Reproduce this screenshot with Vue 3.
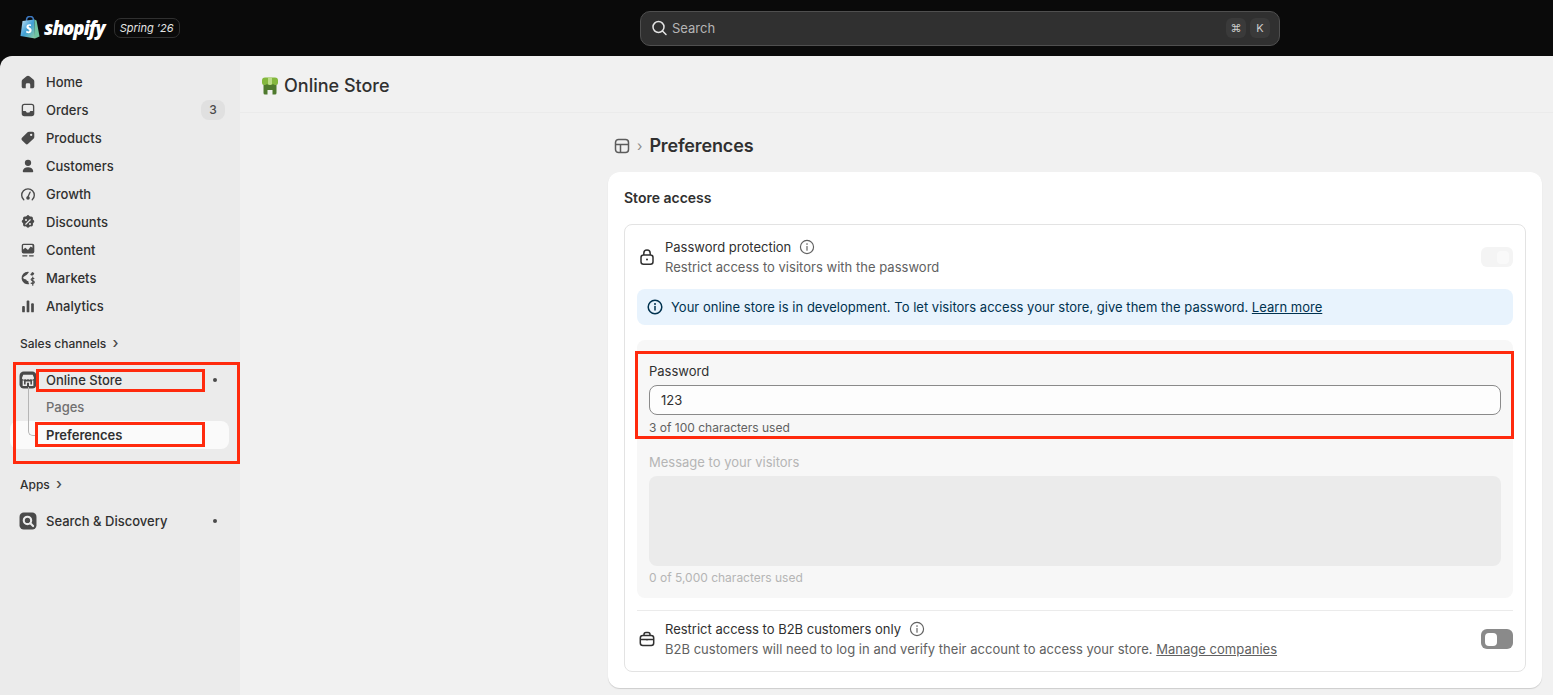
<script setup>
const navItems = [
  { label: 'Home', icon: 'home' },
  { label: 'Orders', icon: 'orders', badge: '3' },
  { label: 'Products', icon: 'products' },
  { label: 'Customers', icon: 'customers' },
  { label: 'Growth', icon: 'growth' },
  { label: 'Discounts', icon: 'discounts' },
  { label: 'Content', icon: 'content' },
  { label: 'Markets', icon: 'markets' },
  { label: 'Analytics', icon: 'analytics' },
];
</script>

<template>
  <div class="page">
    <header class="topbar">
      <div class="brand">
        <svg class="bag" viewBox="0 0 20 23" width="20" height="23">
          <defs>
            <linearGradient id="bagFill" x1="0" y1="0" x2="1" y2="1">
              <stop offset="0" stop-color="#cfe6f5" />
              <stop offset="0.5" stop-color="#3f9fd6" />
              <stop offset="1" stop-color="#8fcf9f" />
            </linearGradient>
          </defs>
          <path d="M6.500 6V4.500C6.500 2 8 .5 10 .5s3.500 1.500 3.500 4V6" fill="none" stroke="#3d78c0" stroke-width="1.500" />
          <path d="M2.500 5 14.500 3.500 15 22.500.5 20z" fill="url(#bagFill)" />
          <path d="M14.500 3.500 16.500 4.500 19.500 20.500 15 22.500z" fill="#6fc3a0" />
          <path d="M11.200 8.700c-.5-.3-1.200-.4-1.800-.4-2 0-3 1.300-3 2.600 0 2.200 3 2.200 3 3.500 0 .6-.5 1-1.100 1-.8 0-1.800-.6-1.800-.6l-.5 1.700s.9.700 2.400.7c2 0 3.200-1.300 3.200-3 0-2.400-3-2.600-3-3.600 0-.4.300-.8 1-.8.600 0 1.200.3 1.200.3z" fill="#fff" />
        </svg>
        <span class="wordmark">shopify</span>
        <span class="edition">Spring ’26</span>
      </div>
      <div class="search">
        <svg viewBox="0 0 20 20" width="20" height="20" fill="none" stroke="#e3e3e3" stroke-width="1.500" stroke-linecap="round">
          <circle cx="9.500" cy="9" r="5.500" />
          <path d="m13.500 13 3.500 3.500" />
        </svg>
        <span class="search-text">Search</span>
        <span class="keys"><kbd>⌘</kbd><kbd>K</kbd></span>
      </div>
    </header>

    <div class="body">
      <aside class="sidebar">
        <nav class="nav">
          <a v-for="item in navItems" :key="item.label" class="nav-row">
            <svg class="nav-icon" viewBox="0 0 20 20" fill="#4a4a4a">
              <template v-if="item.icon === 'home'">
                <path d="M10 3c-.6 0-1.100.2-1.600.6L4 7.300c-.6.500-1 1.300-1 2.100V15c0 1.100.9 2 2 2h2.500v-4a1.500 1.500 0 0 1 1.500-1.500h2a1.500 1.500 0 0 1 1.500 1.500v4H15c1.100 0 2-.9 2-2V9.400c0-.8-.4-1.600-1-2.100l-4.400-3.700C11.100 3.200 10.600 3 10 3z" />
              </template>
              <template v-else-if="item.icon === 'orders'">
                <path fill-rule="evenodd" d="M6 3h8a3 3 0 0 1 3 3v8a3 3 0 0 1-3 3H6a3 3 0 0 1-3-3V6a3 3 0 0 1 3-3zm0 1.500A1.500 1.500 0 0 0 4.500 6v5H7c.6 0 1 .4 1 1 0 .6.800 1 2 1s2-.4 2-1c0-.6.400-1 1-1h2.500V6A1.500 1.500 0 0 0 14 4.500z" />
              </template>
              <template v-else-if="item.icon === 'products'">
                <path fill-rule="evenodd" d="M11 3h4a2 2 0 0 1 2 2v4c0 .6-.2 1.100-.6 1.500l-6.300 6a2 2 0 0 1-2.800 0l-4-4a2 2 0 0 1 0-2.800l6.200-6.100C9.900 3.200 10.400 3 11 3zm2.500 4.800a1.300 1.300 0 1 0 0-2.600 1.300 1.300 0 0 0 0 2.600z" />
              </template>
              <template v-else-if="item.icon === 'customers'">
                <circle cx="10" cy="6.500" r="3.500" />
                <path d="M10 11.500c-3.300 0-5.500 1.700-5.800 4-.1.800.5 1.500 1.300 1.500h9c.8 0 1.400-.7 1.300-1.500-.3-2.300-2.500-4-5.800-4z" />
              </template>
              <template v-else-if="item.icon === 'growth'">
                <path d="M5.300 16.500A7 7 0 1 1 14.700 16.500" fill="none" stroke="#4a4a4a" stroke-width="1.500" stroke-linecap="round" />
                <path d="m10 13 2.300-5" fill="none" stroke="#4a4a4a" stroke-width="1.500" stroke-linecap="round" />
                <circle cx="10" cy="14.500" r="2" />
              </template>
              <template v-else-if="item.icon === 'discounts'">
                <path d="M8.500 2.800a2 2 0 0 1 3 0l.8.800 1.100-.1a2 2 0 0 1 2.100 2.100l-.1 1.100.8.800a2 2 0 0 1 0 3l-.8.800.1 1.100a2 2 0 0 1-2.100 2.100l-1.100-.1-.8.800a2 2 0 0 1-3 0l-.8-.8-1.100.1a2 2 0 0 1-2.100-2.100l.1-1.100-.8-.8a2 2 0 0 1 0-3l.8-.8-.1-1.100a2 2 0 0 1 2.100-2.100l1.100.1z" transform="translate(0 .4)" />
                <path d="m7.500 12.500 5-5" stroke="#ebebeb" stroke-width="1.300" stroke-linecap="round" />
                <circle cx="7.800" cy="7.800" r="1.100" fill="#ebebeb" />
                <circle cx="12.200" cy="12.200" r="1.100" fill="#ebebeb" />
              </template>
              <template v-else-if="item.icon === 'content'">
                <path fill-rule="evenodd" d="M5 3h10a2 2 0 0 1 2 2v7a2 2 0 0 1-2 2H5a2 2 0 0 1-2-2V5a2 2 0 0 1 2-2zm0 1.500a.5.500 0 0 0-.5.500v4.500l2.500-2 3 2.500 3-4 2 1.500V5a.5.500 0 0 0-.5-.5z" />
                <rect x="3.500" y="15.700" width="6" height="1.400" rx=".7" />
                <rect x="11" y="15.700" width="5.500" height="1.400" rx=".7" />
              </template>
              <template v-else-if="item.icon === 'markets'">
                <path d="M10 3a7 7 0 1 0 1.500 13.800c-.8-.8-1.200-2-1-3.200-1.200-.2-2.200-1-2.500-2-1.500-.3-3-.8-3.500-2 1-1.500 3-2 4.500-3.500.3-.8 1.500-1.300 2-2.800z" />
                <path d="M17 5c-.5-.8-1.500-1.400-2.500-1.700-.3 1.200-1 2-2 2.500.3 1 1 1.500 2 1.500 1 0 2-.9 2.500-2.300z" />
                <path d="M16.500 10.500c-1.200-.5-3 0-3 1.300 0 1.900 3.500 1 3.500 2.900 0 1.300-2 1.700-3.500 1M15.300 9v9" fill="none" stroke="#4a4a4a" stroke-width="1.300" stroke-linecap="round" />
              </template>
              <template v-else>
                <rect x="3.500" y="10" width="3" height="7" rx="1" />
                <rect x="8.500" y="4" width="3" height="13" rx="1" />
                <rect x="13.500" y="7" width="3" height="10" rx="1" />
              </template>
            </svg>
            <span>{{ item.label }}</span>
            <span v-if="item.badge" class="badge">{{ item.badge }}</span>
          </a>
        </nav>

        <div class="section-label section-sales">Sales channels <span class="chev">›</span></div>

        <div class="channel">
          <div class="nav-row">
            <svg class="nav-icon" viewBox="1.500 1.500 17 17">
              <rect x="2" y="2" width="16" height="16" rx="4" fill="#4a4a4a" />
              <path d="M5.500 5h9l1.200 3a1.600 1.600 0 0 1-2.900 1 1.900 1.900 0 0 1-2.800 0 1.900 1.900 0 0 1-2.800 0 1.600 1.600 0 0 1-2.900-1z" fill="#ebebeb" />
              <path d="M5.600 10.500V15h2.800v-3h3.200v3h2.800v-4.500" fill="none" stroke="#ebebeb" stroke-width="1.300" />
            </svg>
            <span>Online Store</span>
            <span class="dot"></span>
          </div>
          <div class="sub-row muted">Pages</div>
          <div class="sub-row current">
            <span class="tree-line"></span>
            Preferences
          </div>
          <span class="mark mark-outer"></span>
          <span class="mark mark-store"></span>
          <span class="mark mark-prefs"></span>
        </div>

        <div class="section-label section-apps">Apps <span class="chev">›</span></div>

        <div class="nav-row app-row">
          <svg class="nav-icon" viewBox="1.500 1.500 17 17">
            <rect x="2" y="2" width="16" height="16" rx="4" fill="#4a4a4a" />
            <circle cx="9.500" cy="9.500" r="3.500" fill="none" stroke="#ebebeb" stroke-width="2" />
            <path d="m12.200 12.200 2.600 2.600" stroke="#ebebeb" stroke-width="2" stroke-linecap="round" />
          </svg>
          <span>Search &amp; Discovery</span>
          <span class="dot"></span>
        </div>
      </aside>

      <main class="main">
        <div class="app-title">
          <svg viewBox="0 0 20 20" width="20" height="20">
            <path d="M3.500 8h13v9a1.500 1.500 0 0 1-1.500 1.500h-2.500V14h-5v4.500H5A1.500 1.500 0 0 1 3.500 17z" fill="#4f7a2e" />
            <path d="M5 1.500h10a3 3 0 0 1 3 3V7a2 2 0 0 1-2 2 3 3 0 0 1-3-1 3 3 0 0 1-3 1 3 3 0 0 1-3-1 3 3 0 0 1-3 1 2 2 0 0 1-2-2V4.500a3 3 0 0 1 3-3z" fill="#84b83e" />
            <path d="M8 1.500h4V8a3 3 0 0 1-2 1 3 3 0 0 1-2-1z" fill="#bcdc88" />
          </svg>
          <span>Online Store</span>
        </div>

        <div class="content">
          <div class="crumbs">
            <svg viewBox="0 0 20 20" width="20" height="20" fill="none" stroke="#5c5c5c" stroke-width="1.500">
              <rect x="3.500" y="3.500" width="13" height="13" rx="3" />
              <path d="M3.500 8.500h13M8.500 8.500v8" />
            </svg>
            <span class="crumb-sep">›</span>
            <h1>Preferences</h1>
          </div>

          <section class="card">
            <h2>Store access</h2>
            <div class="panel">
              <div class="setting">
                <svg class="setting-icon" viewBox="0 0 20 20" fill="none" stroke="#303030" stroke-width="1.500">
                  <rect x="4" y="8" width="12" height="9.300" rx="2.500" />
                  <path d="M6.800 8V6.200a3.200 3.200 0 0 1 6.400 0V8" />
                  <circle cx="10" cy="12.600" r="1" fill="#303030" stroke="none" />
                </svg>
                <div class="setting-text">
                  <div class="setting-title">
                    Password protection
                    <svg class="info" viewBox="0 0 20 20" fill="none" stroke="#616161" stroke-width="1.300">
                      <circle cx="10" cy="10" r="7.300" />
                      <path d="M10 9.500v4" stroke-linecap="round" />
                      <circle cx="10" cy="6.800" r=".9" fill="#616161" stroke="none" />
                    </svg>
                  </div>
                  <div class="setting-desc">Restrict access to visitors with the password</div>
                </div>
                <span class="toggle toggle-off"><i></i></span>
              </div>

              <div class="banner">
                <svg viewBox="0 0 20 20" width="20" height="20" fill="none" stroke="#00324f" stroke-width="1.500">
                  <circle cx="10" cy="10" r="6.800" />
                  <path d="M10 9.500v3.500" stroke-linecap="round" />
                  <circle cx="10" cy="7" r="1" fill="#00324f" stroke="none" />
                </svg>
                <span>Your online store is in development. To let visitors access your store, give them the password. <a>Learn more</a></span>
              </div>

              <div class="form-block">
                <label class="field-label">Password</label>
                <div class="input">123</div>
                <div class="help">3 of 100 characters used</div>
                <label class="field-label disabled message-label">Message to your visitors</label>
                <div class="textarea"></div>
                <div class="help disabled">0 of 5,000 characters used</div>
                <span class="mark mark-password"></span>
              </div>

              <div class="setting setting-b2b">
                <svg class="setting-icon" viewBox="0 0 20 20" fill="none" stroke="#303030" stroke-width="1.500">
                  <rect x="3.300" y="6.500" width="13.400" height="10" rx="2.500" />
                  <path d="M7 6.500V5.500A2 2 0 0 1 9 3.500h2a2 2 0 0 1 2 2v1M3.500 10.500h13M10 10v1.500" />
                </svg>
                <div class="setting-text">
                  <div class="setting-title">
                    Restrict access to B2B customers only
                    <svg class="info" viewBox="0 0 20 20" fill="none" stroke="#616161" stroke-width="1.300">
                      <circle cx="10" cy="10" r="7.300" />
                      <path d="M10 9.500v4" stroke-linecap="round" />
                      <circle cx="10" cy="6.800" r=".9" fill="#616161" stroke="none" />
                    </svg>
                  </div>
                  <div class="setting-desc">B2B customers will need to log in and verify their account to access your store. <a>Manage companies</a></div>
                </div>
                <span class="toggle toggle-on"><i></i></span>
              </div>
            </div>
          </section>
        </div>
      </main>
    </div>
  </div>
</template>

<style>
html,
body {
  margin: 0;
  background: #0a0a0a;
  overflow: hidden;
}
</style>

<style scoped>
.page {
  height: 695px;
  display: flex;
  flex-direction: column;
  font-family: Inter, "Liberation Sans", sans-serif;
  font-size: 13px;
  line-height: 20px;
  color: #303030;
  background: #0a0a0a;
  overflow: hidden;
}

.topbar {
  height: 56px;
  flex: none;
  display: grid;
  grid-template-columns: 640px 640px 1fr;
  align-items: center;
}
.brand {
  display: flex;
  align-items: center;
  padding-left: 20px;
}
.bag {
  margin-top: -1px;
}
.wordmark {
  margin-left: 4px;
  font-family: "Open Sans", sans-serif;
  font-size: 18.500px;
  font-weight: 800;
  font-style: italic;
  letter-spacing: -0.9px;
  color: #fff;
}
.edition {
  margin-left: 9px;
  height: 18px;
  padding: 0 5px;
  border: 1px solid #303030;
  border-radius: 7px;
  font-size: 11px;
  line-height: 18px;
  font-style: italic;
  color: #e3e3e3;
}
.search {
  grid-column: 2;
  height: 35px;
  margin-top: 1px;
  box-sizing: border-box;
  display: flex;
  align-items: center;
  padding: 0 9px 1px 8px;
  background: #303030;
  border: 1px solid #4f4f4f;
  border-radius: 10px;
}
.search-text {
  margin-left: 3px;
  color: #b5b5b5;
}
.keys {
  margin-left: auto;
  display: flex;
  gap: 4px;
}
kbd {
  width: 20px;
  height: 20px;
  border-radius: 6px;
  background: #3a3a3a;
  font-family: inherit;
  font-size: 11px;
  text-align: center;
  color: #cccccc;
}

.body {
  flex: 1;
  display: flex;
  min-height: 0;
}

.sidebar {
  width: 240px;
  flex: none;
  box-sizing: border-box;
  padding-top: 12px;
  background: #ebebeb;
  border-top-left-radius: 12px;
  font-weight: 500;
}
.nav-row {
  height: 28px;
  display: flex;
  align-items: center;
  padding: 0 15px 0 19px;
  color: #303030;
}
.nav-icon {
  width: 18px;
  height: 18px;
  flex: none;
  margin-right: 9px;
}
.badge {
  margin-left: auto;
  width: 24px;
  height: 20px;
  border-radius: 8px;
  background: #e0e0e0;
  font-size: 12px;
  text-align: center;
  color: #4a4a4a;
}
.section-label {
  height: 20px;
  padding-left: 20px;
  font-size: 12px;
  line-height: 21px;
  color: #303030;
}
.section-sales {
  margin-top: 13px;
}
.section-apps {
  margin-top: 11px;
}
.chev {
  margin-left: 3px;
  font-size: 15px;
  line-height: 16px;
  color: #4a4a4a;
}
.channel {
  position: relative;
  margin-top: 13px;
  padding-bottom: 14px;
}
.dot {
  margin-left: auto;
  margin-right: 8px;
  width: 4px;
  height: 4px;
  border-radius: 50%;
  background: #4a4a4a;
}
.sub-row {
  height: 28px;
  display: flex;
  align-items: center;
  padding-left: 46px;
}
.muted {
  height: 26px;
  padding-bottom: 1px;
  color: #707070;
}
.current {
  position: relative;
  margin: 0 11px 0 10px;
  padding-left: 36px;
  background: #fafafa;
  border-radius: 8px;
  font-weight: 600;
  color: #303030;
}
.tree-line {
  position: absolute;
  left: 18px;
  bottom: 13px;
  width: 9px;
  height: 48px;
  border-left: 1px solid #b5b5b5;
  border-bottom: 1px solid #b5b5b5;
  border-bottom-left-radius: 5px;
}
.mark {
  position: absolute;
  box-sizing: border-box;
  border: 3px solid #ff2a0d;
  pointer-events: none;
}
.mark-outer {
  left: 13px;
  top: -4px;
  width: 227px;
  height: 102px;
}
.mark-store {
  left: 36px;
  top: 3px;
  width: 169px;
  height: 23px;
}
.mark-prefs {
  left: 35px;
  top: 56px;
  width: 170px;
  height: 25px;
}
.app-row {
  margin-top: 13px;
}

.main {
  flex: 1;
  min-width: 0;
  background: #f1f1f1;
}
.app-title {
  height: 57px;
  box-sizing: border-box;
  display: flex;
  align-items: center;
  gap: 4px;
  padding: 4px 0 0 20px;
  border-bottom: 1px solid #ebebeb;
  font-size: 18px;
  font-weight: 500;
}
.content {
  margin: 0 11px 0 368px;
}
.crumbs {
  height: 59px;
  display: flex;
  align-items: center;
  gap: 5px;
  padding: 6px 0 0 4px;
  box-sizing: border-box;
}
.crumb-sep {
  font-size: 14px;
  color: #8a8a8a;
}
h1 {
  margin: 0 0 0 2px;
  font-size: 18px;
  font-weight: 600;
  letter-spacing: -0.15px;
}
.card {
  height: 516px;
  box-sizing: border-box;
  padding: 16px;
  background: #fff;
  border-radius: 12px;
  box-shadow: 0 1px 1px rgba(0, 0, 0, 0.15);
}
h2 {
  margin: 0 0 16px;
  font-size: 14px;
  line-height: 20px;
  font-weight: 600;
}
.panel {
  height: 448px;
  box-sizing: border-box;
  padding: 0 12px;
  border: 1px solid #e3e3e3;
  border-radius: 8px;
}
.setting {
  height: 64px;
  display: flex;
  align-items: center;
  color: #303030;
}
.setting-icon {
  width: 20px;
  height: 20px;
  flex: none;
  margin-right: 8px;
}
.setting-text {
  flex: 1;
}
.setting-title {
  display: flex;
  align-items: center;
  gap: 7px;
  font-weight: 400;
}
.info {
  width: 18px;
  height: 18px;
}
.setting-desc {
  color: #616161;
  letter-spacing: 0.02px;
}
.setting-desc a {
  text-decoration: underline;
}
.toggle {
  align-self: flex-start;
  width: 32px;
  height: 20px;
  flex: none;
  box-sizing: border-box;
  display: flex;
  align-items: center;
  padding: 0 4px;
  border-radius: 6px;
}
.toggle i {
  width: 12px;
  height: 13px;
  border-radius: 4px;
}
.setting > .toggle {
  margin-top: 22px;
}
.toggle-off {
  justify-content: flex-end;
  background: #f4f4f4;
}
.toggle-off i {
  background: #f9f9f9;
}
.toggle-on {
  background: #8a8a8a;
}
.toggle-on i {
  background: #fff;
}
.banner {
  height: 36px;
  display: flex;
  align-items: center;
  gap: 6px;
  padding: 0 12px 0 8px;
  background: #e8f3fd;
  border-radius: 8px;
  color: #00324f;
  font-weight: 400;
  letter-spacing: 0.02px;
}
.banner a {
  text-decoration: underline;
}
.form-block {
  position: relative;
  height: 258px;
  box-sizing: border-box;
  margin-top: 15px;
  padding: 21px 12px 0;
  background: #f7f7f7;
  border-radius: 8px;
}
.field-label {
  display: block;
  height: 24px;
  color: #303030;
  font-weight: 400;
}
.field-label.disabled {
  color: #b5b5b5;
}
.input {
  height: 30px;
  box-sizing: border-box;
  padding: 0 11px;
  line-height: 28px;
  background: #fdfdfd;
  border: 1px solid #8a8a8a;
  border-radius: 8px;
}
.help {
  margin-top: 3px;
  font-size: 12px;
  line-height: 20px;
  color: #616161;
}
.help.disabled {
  margin-top: 2px;
  color: #b5b5b5;
}
.message-label {
  margin-top: 14px;
  height: 24px;
}
.textarea {
  height: 90px;
  background: #ebebeb;
  border-radius: 8px;
}
.mark-password {
  left: -2px;
  top: 11px;
  width: 879px;
  height: 88px;
}
.setting-b2b {
  height: 60px;
  box-sizing: border-box;
  padding-bottom: 4px;
  margin-top: 12px;
  border-top: 1px solid #ebebeb;
}
.setting-b2b > .toggle {
  margin-top: 18px;
}
</style>
